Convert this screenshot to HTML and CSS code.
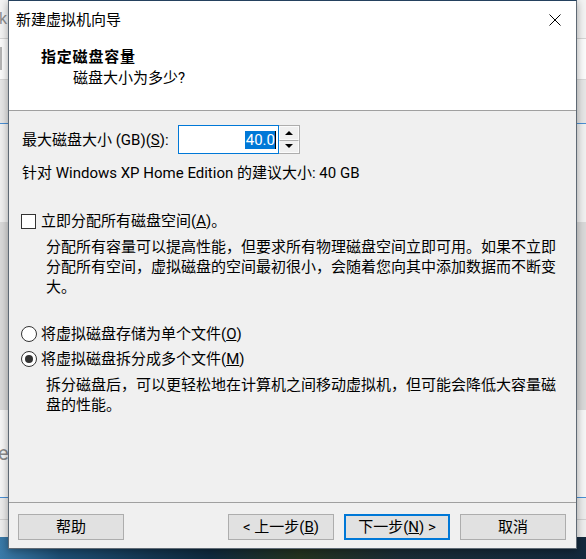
FILE: index.html
```html
<!DOCTYPE html>
<html lang="zh-CN">
<head>
<meta charset="utf-8">
<title>新建虚拟机向导</title>
<link rel="stylesheet" href="styles.css">
</head>
<body>
<div class="desk">
  <div class="band b1"><span class="ghost-k">k</span></div>
  <div class="band b2"><span class="vbar"></span></div>
  <div class="band b3"></div>
  <div class="band b4"></div>
  <div class="band b5"></div>
  <div class="band b6"><span class="ghost-e">e</span></div>
  <div class="band b7"></div>
  <div class="band b8"></div>
  <div class="band wall"></div>
</div>

<div class="dialog">
  <div class="titlebar">
    <span class="title">新建虚拟机向导</span>
    <span class="close"><svg width="12" height="12" viewBox="0 0 12 12"><path d="M0.5 0.5 L11.5 11.5 M11.5 0.5 L0.5 11.5" stroke="#000" stroke-width="1" fill="none"/></svg></span>
  </div>

  <div class="header">
    <div class="h-title">指定磁盘容量</div>
    <div class="h-sub">磁盘大小为多少?</div>
  </div>

  <div class="content">
    <div class="size-row">
      <span class="size-label">最大磁盘大小 (GB)(<u>S</u>):</span>
      <div class="spin">
        <div class="spin-input"><span class="sel">40.0</span><span class="caret"></span></div>
        <div class="spin-btns">
          <span class="spin-btn"><span class="tri-up"></span></span>
          <span class="spin-btn"><span class="tri-down"></span></span>
        </div>
      </div>
    </div>
    <div class="rec">针对 Windows XP Home Edition 的建议大小: 40 GB</div>

    <div class="opt check-row">
      <span class="checkbox"></span>
      <span class="opt-label">立即分配所有磁盘空间(<u>A</u>)。</span>
    </div>
    <p class="desc desc-alloc">分配所有容量可以提高性能，但要求所有物理磁盘空间立即可用。如果不立即分配所有空间，虚拟磁盘的空间最初很小，会随着您向其中添加数据而不断变大。</p>

    <div class="opt radio-one">
      <span class="radio"></span>
      <span class="opt-label">将虚拟磁盘存储为单个文件(<u>O</u>)</span>
    </div>
    <div class="opt radio-two">
      <span class="radio checked"></span>
      <span class="opt-label">将虚拟磁盘拆分成多个文件(<u>M</u>)</span>
    </div>
    <p class="desc desc-split">拆分磁盘后，可以更轻松地在计算机之间移动虚拟机，但可能会降低大容量磁盘的性能。</p>
  </div>

  <div class="footer">
    <button class="btn">帮助</button>
    <button class="btn btn-back">&lt; 上一步(<u>B</u>)</button>
    <button class="btn btn-next">下一步(<u>N</u>) &gt;</button>
    <button class="btn">取消</button>
  </div>
</div>
</body>
</html>
```

FILE: styles.css
```css
* { box-sizing: border-box; }
html, body { margin: 0; padding: 0; }
body {
  width: 586px;
  height: 559px;
  position: relative;
  overflow: hidden;
  font-family: Roboto, "Noto Sans CJK SC", sans-serif;
  background: #f0f0f0;
}

/* backdrop window + desktop */
.desk { height: 559px; display: flex; flex-direction: column; }
.band { flex: none; overflow: hidden; }
.b1 { height: 39px; background: #f3f3f3; border-bottom: 1px solid #d4d4d4; }
.ghost-k { display: block; margin-left: -1px; font-size: 16px; line-height: 38px; color: #8e8e8e; }
.b2 { height: 41px; background: #fbfbfb; border-bottom: 1px solid #d8d8d8; padding-top: 8px; }
.vbar { display: block; width: 2px; height: 23px; background: #b4b4b4; }
.b3 { height: 44px; background: #e6e6e6; border-bottom: 1px solid #4a8fd4; }
.b4 { height: 98px; background: #f0f0f0; }
.b5 { height: 188px; background: #d9d9d9; }
.b6 { height: 88px; background: #f6f6f6; border-bottom: 1px solid #4a8fd4; padding-top: 30px; }
.ghost-e { display: block; margin-left: -2px; font-size: 20px; line-height: 26px; color: #8a8a8a; }
.b7 { height: 22px; background: #ececec; border-bottom: 1px solid #cfcfcf; }
.b8 { height: 17px; background: #eeeeee; }
.wall {
  flex: 1;
  background: linear-gradient(90deg, #3a7aa8 0, #1d4e73 60px, #143650 150px, #0f2a3e 210px, #24331f 300px, #1a2c36 400px, #13293d 586px);
}

/* dialog */
.dialog {
  position: absolute;
  left: 8px;
  top: 0;
  width: 569px;
  height: 549px;
  border: 1px solid #5f6a75;
  border-top-color: #24415e;
  background: #f0f0f0;
  display: flex;
  flex-direction: column;
  font-size: 15px;
  color: #000;
  box-shadow: 0 2px 8px rgba(0, 0, 0, 0.35);
}

.titlebar {
  height: 38px;
  flex: none;
  background: #fff;
  display: flex;
  align-items: center;
  padding-left: 7px;
}
.title { line-height: 20px; }
.close { margin-left: auto; margin-right: 15px; width: 12px; height: 12px; display: flex; }

.header {
  flex: none;
  height: 72px;
  background: #fff;
  border-bottom: 1px solid #a0a0a0;
  padding: 8px 0 0 32px;
}
.h-title { font-weight: bold; line-height: 21px; letter-spacing: 0.8px; }
.h-sub { line-height: 21px; padding-left: 32px; }

.content {
  flex: 1;
  padding: 14px 13px 0 13px;
}

.size-row { display: flex; align-items: center; height: 29px; }
.size-label { width: 156px; line-height: 20px; }

.spin { display: flex; height: 29px; }
.spin-input {
  width: 101px;
  height: 29px;
  background: #fff;
  border: 1px solid #0078d7;
  display: flex;
  align-items: center;
  justify-content: flex-end;
  padding-right: 2px;
}
.sel { background: #0078d7; color: #fff; line-height: 18px; padding: 0 0 0 1px; }
.caret { width: 1px; height: 18px; background: #000; }
.spin-btns {
  width: 21px;
  height: 29px;
  border: 1px solid #adadad;
  border-left: none;
  display: flex;
  flex-direction: column;
  background: #f0f0f0;
}
.spin-btn {
  flex: 1;
  display: flex;
  align-items: center;
  justify-content: center;
  border: 1px solid #fbfbfb;
}
.spin-btn + .spin-btn { border-top: 1px solid #adadad; }
.tri-up, .tri-down { width: 0; height: 0; border-left: 4px solid transparent; border-right: 4px solid transparent; }
.tri-up { border-bottom: 4px solid #000; }
.tri-down { border-top: 4px solid #000; }

.rec { margin-top: 9px; line-height: 20px; }

.opt { display: flex; align-items: center; height: 20px; }
.opt-label { margin-left: 5px; line-height: 20px; }
.check-row { margin-top: 28px; }
.radio-one { margin-top: 27px; }
.radio-two { margin-top: 5px; }

.checkbox {
  width: 15px;
  height: 15px;
  border: 1px solid #333;
  background: #fff;
  flex: none;
  margin-left: -1px;
}
.radio {
  width: 16px;
  height: 16px;
  border: 1px solid #333;
  border-radius: 50%;
  background: #fff;
  flex: none;
  margin-left: -1px;
  margin-right: -1px;
  display: flex;
  align-items: center;
  justify-content: center;
}
.radio.checked::after {
  content: "";
  width: 8px;
  height: 8px;
  border-radius: 50%;
  background: #333;
}

.desc { margin: 0; padding-left: 24px; line-height: 20px; }
.desc-alloc { margin-top: 6px; }
.desc-split { margin-top: 6px; }

.footer {
  flex: none;
  border-top: 1px solid #a0a0a0;
  padding: 11px 10px 0 9px;
  height: 46px;
  display: flex;
  gap: 10px;
}
.btn {
  width: 106px;
  height: 26px;
  border: 1px solid #adadad;
  background: #e1e1e1;
  font-family: inherit;
  font-size: 15px;
  color: #000;
  padding: 0;
  line-height: 22px;
}
.btn-back { margin-left: auto; }
.btn-next { border: 2px solid #0078d7; }
```
